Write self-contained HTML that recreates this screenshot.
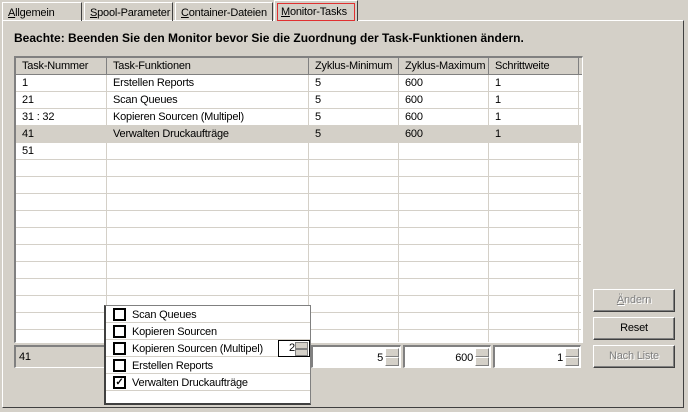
<!DOCTYPE html>
<html><head><style>
*{margin:0;padding:0;box-sizing:border-box}
body{width:688px;height:412px;background:#d4d0c8;font-family:"Liberation Sans",sans-serif;font-size:11px;color:#000;position:relative;overflow:hidden;white-space:nowrap;letter-spacing:-0.2px}
.a{position:absolute}
.tab{position:absolute;top:2px;height:19px;border-top:1px solid #fff;border-left:1px solid #fff;border-right:1px solid #404040;padding:4px 0 0 5px;font-size:11px}
.pane{position:absolute;left:2px;top:20px;width:682px;height:388px;border-top:1px solid #fff;border-left:1px solid #fff;border-right:1px solid #404040;border-bottom:1px solid #404040}
.grid{position:absolute;left:14px;top:56px;width:569px;height:287px;background:#fff;border-top:2px solid #808080;border-left:2px solid #808080;border-bottom:1px solid #fff;border-right:1px solid #fff;overflow:hidden}
.hd{position:absolute;top:0;height:17px;background:#d4d0c8;border-right:1px solid #808080;border-bottom:1px solid #808080;padding:2px 0 0 6px;font-size:11px;overflow:hidden}
.row{position:absolute;left:0;width:565px;height:17px;border-bottom:1px solid #d4d0c8}
.c{position:absolute;top:0;height:17px;border-right:1px solid #d4d0c8;padding:2px 0 0 6px;overflow:hidden}
.btn{position:absolute;left:593px;width:82px;height:23px;border-top:1px solid #fff;border-left:1px solid #fff;border-right:1px solid #404040;border-bottom:1px solid #404040;box-shadow:inset -1px -1px 0 #808080;text-align:center;padding-top:4px}
.dis{color:#808080;text-shadow:1px 1px 0 #fff}
.ed{position:absolute;top:345px;height:23px;background:#fff;border-top:2px solid #808080;border-left:2px solid #808080;border-bottom:1px solid #fff;border-right:1px solid #fff;text-align:right;padding:5px 17px 0 0}
.sp{position:absolute;right:1px;width:14px;height:9px;background:#d4d0c8;border-top:1px solid #fff;border-left:1px solid #fff;border-right:1px solid #808080;border-bottom:1px solid #808080}
.pop{position:absolute;left:104px;top:305px;width:207px;height:100px;background:#fff;border:1px solid #808080;border-left:2px solid #404040;border-bottom:2px solid #404040}
.it{position:absolute;left:0;width:204px;height:17px;border-bottom:1px solid #d4d0c8;padding:3px 0 0 26px}
.cb{position:absolute;left:7px;top:2px;width:13px;height:13px;border:2px solid #000;background:#fff}
</style></head><body>
<div class="pane"></div>
<div class="tab" style="left:2px;width:80px"><u>A</u>llgemein</div>
<div class="tab" style="left:84px;width:89px"><u>S</u>pool-Parameter</div>
<div class="tab" style="left:175px;width:98px"><u>C</u>ontainer-Dateien</div>
<div class="tab" style="left:274px;top:0;height:21px;width:84px;background:#d4d0c8;padding:2px 0 0 2px"><div style="border:1px solid #e03030;padding:2px 3px 2px 3px;width:78px;height:18px"><u>M</u>onitor-Tasks</div></div>
<div class="a" style="left:14px;top:31px;font-weight:bold;font-size:12px;letter-spacing:0">Beachte: Beenden Sie den Monitor bevor Sie die Zuordnung der Task-Funktionen ändern.</div>
<div class="grid">
<div class="hd" style="left:0;width:91px">Task-Nummer</div>
<div class="hd" style="left:91px;width:202px">Task-Funktionen</div>
<div class="hd" style="left:293px;width:90px">Zyklus-Minimum</div>
<div class="hd" style="left:383px;width:90px">Zyklus-Maximum</div>
<div class="hd" style="left:473px;width:90px">Schrittweite</div>
<div class="hd" style="left:563px;width:10px;padding:0"></div>
<div id="rows"></div>
</div>
<div class="btn dis" style="top:289px"><u>Ä</u>ndern</div>
<div class="btn" style="top:317px">Reset</div>
<div class="btn dis" style="top:345px">Nach Liste</div>
<div class="ed" style="left:14px;width:92px;background:#d4d0c8;text-align:left;padding:4px 0 0 3px">41</div>
<div class="ed" style="left:311px;width:90px">5<div class="sp" style="top:1px"></div><div class="sp" style="top:10px"></div></div>
<div class="ed" style="left:403px;width:88px">600<div class="sp" style="top:1px"></div><div class="sp" style="top:10px"></div></div>
<div class="ed" style="left:493px;width:88px">1<div class="sp" style="top:1px"></div><div class="sp" style="top:10px"></div></div>
<div class="pop">
<div class="it" style="top:0">Scan Queues<div class="cb"></div></div>
<div class="it" style="top:17px">Kopieren Sourcen<div class="cb"></div></div>
<div class="it" style="top:34px">Kopieren Sourcen (Multipel)<div class="cb"></div>
<div style="position:absolute;left:172px;top:0;width:32px;height:17px;border:1px solid #000;background:#fff;padding:1px 0 0 10px">2<div style="position:absolute;right:1px;top:1px;width:13px;height:7px;background:#d4d0c8;border:1px solid #808080"></div><div style="position:absolute;right:1px;top:8px;width:13px;height:7px;background:#d4d0c8;border:1px solid #808080"></div></div></div>
<div class="it" style="top:51px">Erstellen Reports<div class="cb"></div></div>
<div class="it" style="top:68px">Verwalten Druckaufträge<div class="cb" style="font-size:10px;line-height:9px;text-align:center;font-weight:bold">✓</div></div>
</div>
<script>
var d=[["1","Erstellen Reports","5","600","1"],["21","Scan Queues","5","600","1"],["31 : 32","Kopieren Sourcen (Multipel)","5","600","1"],["41","Verwalten Druckaufträge","5","600","1"],["51","","","",""]];
var h="",L=[0,91,293,383,473],W=[91,202,90,90,90];
for(var i=0;i<16;i++){var r=d[i]||["","","","",""];h+='<div class="row" style="top:'+(17+i*17)+'px;'+(i==3?'background:#d4d0c8':'')+'">';for(var j=0;j<5;j++)h+='<div class="c" style="left:'+L[j]+'px;width:'+W[j]+'px">'+r[j]+'</div>';h+='</div>';}
document.getElementById("rows").innerHTML=h;
</script>
</body></html>
